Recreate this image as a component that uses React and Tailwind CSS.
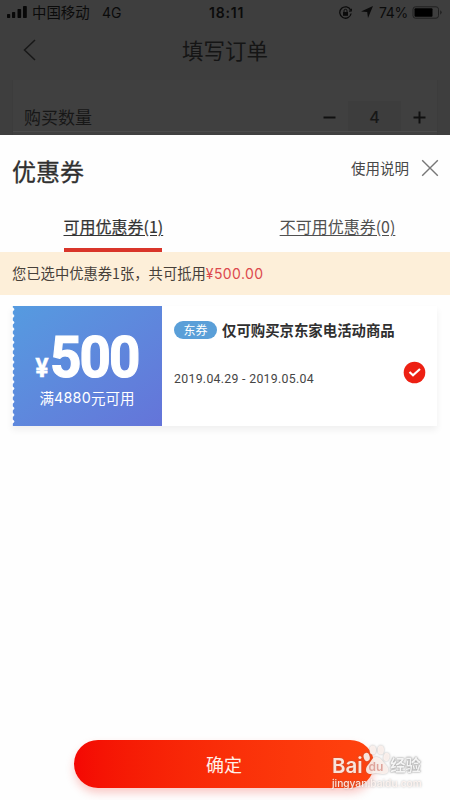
function StatusBar() {
  return (
    <div className="flex h-6 items-center pl-[7px] pr-[7px] text-[#0b0b0b]">
      <svg width="20" height="12" viewBox="0 0 20 12" fill="#080808">
        <rect x="0" y="8" width="3.2" height="4" rx=".7" />
        <rect x="5" y="6" width="3.2" height="6" rx=".7" />
        <rect x="10.5" y="3" width="3.6" height="9" rx=".7" />
        <rect x="16" y="0" width="3.8" height="12" rx=".7" />
      </svg>
      <span className="ml-[5px] w-[70px] text-[14.4px]">中国移动</span>
      <span className="w-[107px] font-[Inter] text-[14px]">4G</span>
      <span className="w-[130px] font-[Inter] text-[14px] font-semibold tracking-[0.8px]">18:11</span>
      <svg width="13" height="13" viewBox="0 0 13 13" fill="none" stroke="#0b0b0b" strokeWidth="1.3">
        <path d="M11.7 4.2A5.7 5.7 0 1 0 12.1 7.5" />
        <path d="M10 5.2l2.2-.3.2-2.2" />
        <rect x="4" y="6" width="5" height="3.8" fill="#0b0b0b" stroke="none" />
        <path d="M5 6V4.8a1.5 1.5 0 0 1 3 0V6" strokeWidth="1" />
      </svg>
      <svg className="ml-[9px]" width="12" height="12" viewBox="0 0 12 12" fill="#0b0b0b">
        <path d="M12 0L7 12L6.2 6.1L0 5.4Z" />
      </svg>
      <span className="ml-[6px] w-[33px] font-[Inter] text-[14px] tracking-[-0.3px]">74%</span>
      <svg width="31" height="13" viewBox="0 0 31 13">
        <rect x="1" y=".8" width="25.5" height="11.4" rx="2.5" fill="none" stroke="#202020" />
        <rect x="2.5" y="2.3" width="18" height="8.4" rx="1" fill="#000" />
        <path d="M28.2 4.3q3 2.2 0 4.4z" fill="#202020" />
      </svg>
    </div>
  );
}

function Header() {
  return (
    <div className="grid h-[56px] grid-cols-[50px_1fr_50px] items-center pb-[5px] text-[#151515]">
      <svg className="ml-[22px]" width="15" height="24" viewBox="0 0 15 24" fill="none" stroke="#181818" strokeWidth="1.5">
        <path d="M13 2L2.5 12L13 22" />
      </svg>
      <span className="text-center text-[21.5px] leading-6">填写订单</span>
    </div>
  );
}

function QuantityRow() {
  return (
    <div className="mx-3 h-[55px] border-x border-[#3c3c3c] bg-[#404040]">
      <div className="flex h-[52px] items-end border-b border-[#4b4b4b] pl-[11px] pr-[11px] text-[#171717]">
        <span className="h-[28px] flex-1 text-[17px] leading-[28px]">购买数量</span>
        <svg className="mb-[7px]" width="13" height="13" viewBox="0 0 13 13">
          <path d="M.5 6.5h12" stroke="#101010" strokeWidth="2" />
        </svg>
        <span className="mx-[12px] h-[30px] w-[53px] bg-[#3d3d3d] text-center font-[Inter] text-[16px] font-medium leading-[33px]">4</span>
        <svg className="mb-[7px]" width="13" height="13" viewBox="0 0 13 13">
          <path d="M.5 6.5h12M6.5.5v12" stroke="#101010" strokeWidth="2" />
        </svg>
      </div>
    </div>
  );
}

function Coupon() {
  return (
    <div className="mx-3 mt-[11px] flex h-[120px] w-[425px] bg-white shadow-[0_4px_7px_rgba(0,0,0,0.06)]">
      <div className="relative flex w-[150px] flex-col items-center bg-linear-to-br from-[#559be0] to-[#6474d9] pt-[27px] text-white">
        <svg className="absolute left-0 top-0" width="4" height="120">
          <defs>
            <pattern id="perforation" width="4" height="6.6" patternUnits="userSpaceOnUse">
              <path d="M0 0H.8V1.3Q4 3.3 .8 5.3V6.6H0Z" fill="#fff" />
            </pattern>
          </defs>
          <rect width="4" height="120" fill="url(#perforation)" />
        </svg>
        <div className="flex h-[50px] items-baseline font-[Roboto] font-bold">
          <span className="mr-[1px] text-[25px] leading-[50px] [-webkit-text-stroke:0.3px_white]">¥</span>
          <span className="-mr-[3px] inline-block origin-left scale-x-[0.96] text-[57px] leading-[50px] tracking-[-2px] [-webkit-text-stroke:1.2px_white]">500</span>
        </div>
        <span className="mt-[5px] flex whitespace-nowrap text-[14.5px] leading-5">
          满<span className="font-[Inter] text-[14.3px] tracking-[0.3px]">4880</span>元可用
        </span>
      </div>
      <div className="flex flex-1 flex-col pl-3">
        <div className="mt-[13px] flex h-[22px] items-center">
          <span className="h-[18px] w-[43px] rounded-full bg-[#5a9fd8] text-center text-[12px] leading-[17px] text-white">东券</span>
          <span className="ml-[5px] text-[14.4px] font-bold text-[#303030]">仅可购买京东家电活动商品</span>
        </div>
        <div className="mt-[20px] flex items-start">
          <span className="mt-[8px] flex-1 whitespace-nowrap font-[Roboto] text-[12.3px] leading-[20px] tracking-[0.3px] text-[#454545]">2019.04.29 - 2019.05.04</span>
          <svg className="mr-[11px]" width="23" height="23" viewBox="0 0 23 23">
            <circle cx="11.5" cy="11.5" r="10.8" fill="#ed2013" />
            <path d="M6.5 11L10 14.2L17 8" fill="none" stroke="#fff" strokeWidth="2.2" />
          </svg>
        </div>
      </div>
    </div>
  );
}

function Watermark() {
  return (
    <div className="absolute left-[258px] top-[4px] h-[50px] w-[100px] text-[#fff4f0]/90 [filter:drop-shadow(0_0_0.8px_rgba(110,110,110,0.55))]">
      <div className="flex h-[33px] items-end whitespace-nowrap">
        <span className="w-[31px] font-[Inter] text-[20.5px] font-semibold leading-[23px]">Bai</span>
        <svg width="27" height="34" viewBox="0 0 27 34" fill="currentColor">
          <ellipse cx="3.7" cy="14" rx="3" ry="4.2" transform="rotate(-15 3.7 14)" />
          <ellipse cx="9.8" cy="7" rx="3.2" ry="4.6" />
          <ellipse cx="17.8" cy="7" rx="3.2" ry="4.6" />
          <ellipse cx="23.5" cy="14" rx="3" ry="4.2" transform="rotate(15 23.5 14)" />
          <path d="M13 14c-4 0-5 5-8 8-3 3-3 9 3 9l5-1 6 1c7 1 8-5 4-9-3-3-5-8-10-8Z" />
          <text x="5.5" y="28" fontFamily="Inter" fontSize="12" fontWeight="600" fill="#dfa49c">du</text>
        </svg>
        <span className="text-[15.5px] font-bold leading-[25px] text-[#f4f4f4] [text-shadow:0_0_1px_#888]">经验</span>
      </div>
      <div className="font-[Inter] text-[10.2px] font-medium leading-[13px]">jingyan.baidu.com</div>
    </div>
  );
}

export default function App() {
  return (
    <main className="flex h-[800px] w-[450px] flex-col overflow-hidden bg-white font-['Noto_Sans_CJK_SC',sans-serif]">
      <header className="h-[135px] shrink-0 bg-[#3e3e3e]">
        <StatusBar />
        <Header />
        <QuantityRow />
      </header>
      <section className="flex h-[665px] flex-col bg-[#fefefe]">
        <div className="flex h-[72px] items-center pl-3 pr-[11px]">
          <h1 className="flex-1 text-[24px] text-[#303030] [-webkit-text-stroke:0.3px_#303030]">优惠券</h1>
          <span className="mb-[6px] text-[14.5px] text-[#484848]">使用说明</span>
          <svg className="mb-[6px] ml-[12px]" width="18" height="18" viewBox="0 0 18 18" fill="none" stroke="#777" strokeWidth="1.4">
            <path d="M1.2 1.2L16.8 16.8M16.8 1.2L1.2 16.8" />
          </svg>
        </div>
        <nav className="grid h-[45px] grid-cols-2 text-[16px] text-[#505050]">
          <div className="flex justify-center">
            <span className="h-[45px] w-[98px] whitespace-nowrap border-b-[4px] border-[#d9352a] text-center leading-[38px] text-[#343434] underline underline-offset-2 [-webkit-text-stroke:0.2px_#343434]">可用优惠券(1)</span>
          </div>
          <span className="text-center leading-[38px] underline underline-offset-2">不可用优惠券(0)</span>
        </nav>
        <div className="h-[43px] bg-[#fdefd9] pl-3 text-[14.3px] leading-[42px] text-[#474039]">
          您已选中优惠券1张，共可抵用<span className="font-[Inter] text-[14px] tracking-[0.4px] text-[#dc494d]">¥500.00</span>
        </div>
        <Coupon />
        <div className="relative ml-[74px] mt-auto mb-[12px] h-[48px] w-[300px]">
          <button className="h-full w-full rounded-full bg-linear-to-r from-[#f40703] to-[#ff430e] text-[18px] text-[#fff0e9] shadow-[0_5px_8px_rgba(240,50,40,0.25)]">确定</button>
          <Watermark />
        </div>
      </section>
    </main>
  );
}
